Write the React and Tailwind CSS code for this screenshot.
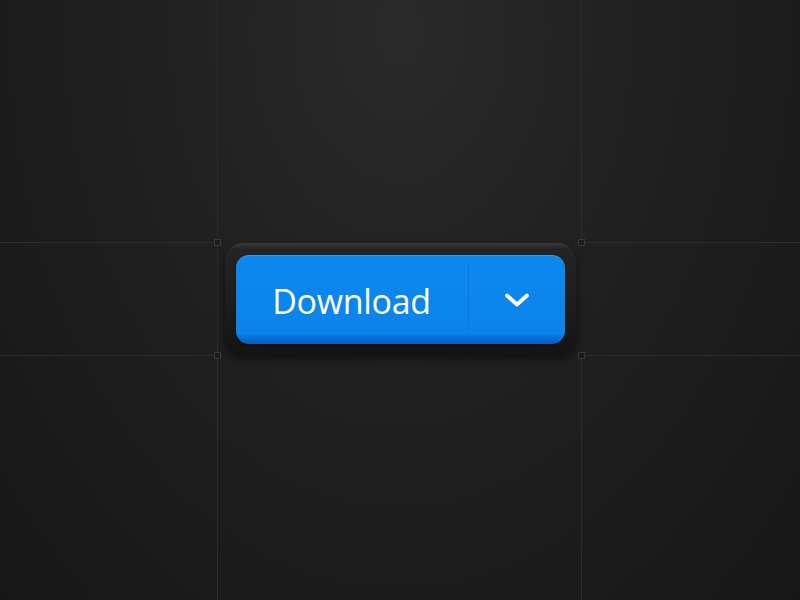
import React from "react";

// Corner marker drawn where the guide lines cross
const Marker = ({ className }) => (
  <span
    className={`absolute w-[7px] h-[7px] border border-[#3a3a3a] bg-[#1c1c1c] ${className}`}
  />
);

const Chevron = () => (
  <svg width="26" height="16" viewBox="0 0 26 16" fill="none">
    <path
      d="M3 3.5 L13 12.5 L23 3.5"
      stroke="white"
      strokeWidth="3.8"
      strokeLinecap="round"
      strokeLinejoin="round"
    />
  </svg>
);

const App = () => {
  return (
    <div
      className="w-[800px] h-[600px] overflow-hidden bg-[radial-gradient(ellipse_at_50%_5%,#2a2a2a_0%,#202020_45%,#171717_100%)]"
      style={{ fontFamily: '"Open Sans", "Liberation Sans", sans-serif' }}
    >
      <div className="grid grid-cols-[218px_364px_218px] grid-rows-[243px_112px_245px] h-full">
        {/* Top row */}
        <div className="border-r border-b border-[#2c2c2c]" />
        <div className="border-r border-[#2c2c2c]" />
        <div className="border-b border-[#2c2c2c]" />

        {/* Middle row */}
        <div className="border-r border-[#2c2c2c] relative">
          <Marker className="-top-[4px] -right-[4px]" />
          <Marker className="-bottom-[4px] -right-[4px]" />
        </div>
        <div className="flex items-center justify-center px-[6px] relative z-10">
          {/* Outer well */}
          <div className="w-[351px] h-[112px] rounded-[18px] bg-[linear-gradient(to_bottom,#3a3a3a_0px,#242424_6px,#1c1c1c_60%,#131313_100%)] shadow-[0_4px_10px_rgba(0,0,0,0.5)] pt-[12px] px-[11px] pb-[11px]">
            {/* Blue split button */}
            <div className="h-full flex rounded-[13px] overflow-hidden bg-[linear-gradient(to_bottom,#0d88ef_0%,#0a84eb_88%,#0771d6_93%,#0660b8_100%)] shadow-[inset_0_1px_0_rgba(255,255,255,0.15),0_1px_2px_rgba(0,0,0,0.6)]">
              <button className="w-[232px] flex items-center justify-center text-white text-[34px] font-medium leading-none pt-[2px] tracking-[-0.3px]">
                Download
              </button>
              <div className="w-px my-[9px] bg-[#1873cb]" />
              <button className="flex-1 flex items-center justify-center pt-[1px]">
                <Chevron />
              </button>
            </div>
          </div>
        </div>
        <div className="relative">
          <Marker className="-top-[4px] -left-[4px]" />
          <Marker className="-bottom-[4px] -left-[4px]" />
        </div>

        {/* Bottom row */}
        <div className="border-r border-t border-[#2c2c2c]" />
        <div className="border-r border-[#2c2c2c]" />
        <div className="border-t border-[#2c2c2c]" />
      </div>
    </div>
  );
};

export default App;
